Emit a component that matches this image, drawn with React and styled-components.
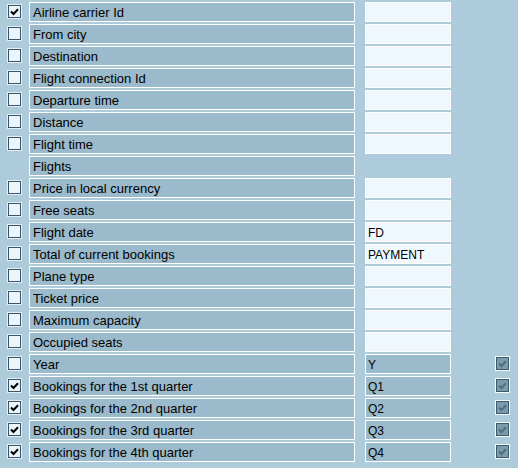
import React from "react";
import styled, { createGlobalStyle } from "styled-components";

const Global = createGlobalStyle`
  html, body { margin: 0; padding: 0; background: #aecbdc; }
  body { font-family: "Liberation Sans", Arial, sans-serif; width: 518px; height: 468px; overflow: hidden; }
`;

const Page = styled.div`
  padding-top: 2px;
  display: flex;
  flex-direction: column;
  gap: 2px;
`;

const Row = styled.div`
  display: flex;
  align-items: center;
  height: 20px;
`;

const CheckCell = styled.div`
  width: 29px;
  height: 20px;
  display: flex;
  align-items: center;
  padding-left: 8px;
  box-sizing: border-box;
`;

const Check = styled.div`
  width: 13px;
  height: 13px;
  box-sizing: border-box;
  border: 1px solid ${(p) => (p.$disabled ? "#3e5a6a" : "#3b5566")};
  box-shadow: 0 0 0 1px ${(p) => (p.$disabled ? "#f4f9fc" : "#e3eef5")};
  background: ${(p) => (p.$disabled ? "#7b9bac" : "#eaf4fb")};
  display: flex;
  align-items: center;
  justify-content: center;
  margin-top: -1px;
`;

const Label = styled.div`
  width: 326px;
  height: 20px;
  box-sizing: border-box;
  border: 1px solid #ffffff;
  background: #9bbacb;
  color: #000;
  font-size: 13px;
  line-height: 18px;
  padding-left: 3px;
  padding-top: 1px;
  white-space: nowrap;
  overflow: hidden;
`;

const Field = styled.div`
  width: 86px;
  height: 20px;
  margin-left: 10px;
  box-sizing: border-box;
  border: 1px solid #ffffff;
  background: ${(p) => (p.$readonly ? "#9bbacb" : "#eff8ff")};
  color: #000;
  font-size: 12px;
  line-height: 18px;
  padding-left: 2px;
  padding-top: 1px;
  white-space: nowrap;
  overflow: hidden;
`;

const Spacer = styled.div`
  width: 86px;
  height: 20px;
  margin-left: 10px;
`;

const RightCell = styled.div`
  margin-left: 44px;
  width: 14px;
  display: flex;
  align-items: center;
  justify-content: center;
`;

const Tick = ({ color }) => (
  <svg width="9" height="8" viewBox="0 0 9 8">
    <path d="M1 3.5 L3.5 6 L8 1.2" fill="none" stroke={color} strokeWidth="2" />
  </svg>
);

const rows = [
  { label: "Airline carrier Id", checked: true, field: "" },
  { label: "From city", field: "" },
  { label: "Destination", field: "" },
  { label: "Flight connection Id", field: "" },
  { label: "Departure time", field: "" },
  { label: "Distance", field: "" },
  { label: "Flight time", field: "" },
  { label: "Flights", header: true },
  { label: "Price in local currency", field: "" },
  { label: "Free seats", field: "" },
  { label: "Flight date", field: "FD" },
  { label: "Total of current bookings", field: "PAYMENT" },
  { label: "Plane type", field: "" },
  { label: "Ticket price", field: "" },
  { label: "Maximum capacity", field: "" },
  { label: "Occupied seats", field: "" },
  { label: "Year", field: "Y", ro: true },
  { label: "Bookings for the 1st quarter", checked: true, field: "Q1", ro: true },
  { label: "Bookings for the 2nd quarter", checked: true, field: "Q2", ro: true },
  { label: "Bookings for the 3rd quarter", checked: true, field: "Q3", ro: true },
  { label: "Bookings for the 4th quarter", checked: true, field: "Q4", ro: true },
];

export default function App() {
  return (
    <>
      <Global />
      <Page>
        {rows.map((r, i) => (
          <Row key={i}>
            <CheckCell>
              {!r.header && <Check>{r.checked && <Tick color="#000" />}</Check>}
            </CheckCell>
            <Label>{r.label}</Label>
            {r.header ? (
              <Spacer />
            ) : (
              <Field $readonly={r.ro}>{r.field}</Field>
            )}
            {r.ro && (
              <RightCell>
                <Check $disabled>
                  <Tick color="#4f6f80" />
                </Check>
              </RightCell>
            )}
          </Row>
        ))}
      </Page>
    </>
  );
}
